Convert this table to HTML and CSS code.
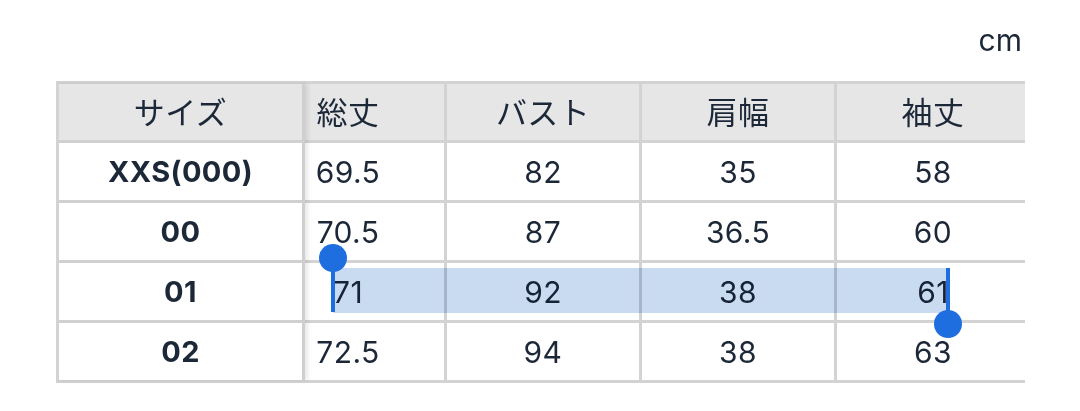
FILE: index.html
```html
<!DOCTYPE html>
<html lang="ja">
<head>
<meta charset="utf-8">
<title>サイズ表</title>
<link rel="stylesheet" href="styles.css">
</head>
<body>
<div class="page">
  <div class="unit">cm</div>
  <div class="size-table">
    <div class="fixed-col">
      <div class="cell head">サイズ</div>
      <div class="cell label">XXS(000)</div>
      <div class="cell label">00</div>
      <div class="cell label">01</div>
      <div class="cell label">02</div>
    </div>
    <div class="scroll-area">
      <div class="data-grid">
        <div class="cell head">総丈</div>
        <div class="cell head">バスト</div>
        <div class="cell head">肩幅</div>
        <div class="cell head">袖丈</div>

        <div class="cell">69.5</div>
        <div class="cell">82</div>
        <div class="cell">35</div>
        <div class="cell">58</div>

        <div class="cell">70.5</div>
        <div class="cell">87</div>
        <div class="cell">36.5</div>
        <div class="cell">60</div>

        <div class="cell">71</div>
        <div class="cell">92</div>
        <div class="cell">38</div>
        <div class="cell">61</div>

        <div class="cell">72.5</div>
        <div class="cell">94</div>
        <div class="cell">38</div>
        <div class="cell">63</div>
      </div>
    </div>
    <div class="selection"></div>
    <div class="handle handle-start"><span class="knob"></span><span class="stem"></span></div>
    <div class="handle handle-end"><span class="stem"></span><span class="knob"></span></div>
  </div>
</div>
</body>
</html>
```

FILE: styles.css
```css
html, body {
  margin: 0;
  padding: 0;
  background: #ffffff;
}

.page {
  width: 1080px;
  height: 411px;
  box-sizing: border-box;
  padding: 23px 0 0 56px;
  font-family: Inter, "Noto Sans CJK JP", sans-serif;
  color: #1c2738;
}

.unit {
  text-align: right;
  padding-right: 58px;
  font-size: 30px;
  line-height: 34px;
  height: 34px;
  margin-bottom: 24px;
}

.size-table {
  position: relative;
  display: flex;
  width: 969px;
  border-top: 3px solid #d3d3d3;
  border-bottom: 3px solid #d3d3d3;
}

.fixed-col {
  position: relative;
  z-index: 1;
  display: grid;
  grid-template-columns: 243px;
  grid-template-rows: 56px repeat(4, 57px);
  row-gap: 3px;
  background: #d0d0d0;
  border-left: 3px solid #d3d3d3;
  border-right: 3px solid #cfcfcf;
  box-shadow: 3px 0 4px rgba(0, 0, 0, 0.09);
}

.scroll-area {
  flex: 1;
  overflow: hidden;
}

.data-grid {
  margin-left: -53px;
  display: grid;
  grid-template-columns: repeat(4, 192px);
  grid-template-rows: 56px repeat(4, 57px);
  gap: 3px;
  width: max-content;
  background: #d3d3d3;
}

.cell {
  display: flex;
  align-items: center;
  justify-content: center;
  background: #ffffff;
  font-size: 30px;
  letter-spacing: 0.4px;
}

.cell.head {
  background: #e6e6e6;
  font-size: 31px;
  padding-bottom: 3px;
}

.cell.label {
  font-weight: 700;
  font-size: 29px;
}

.selection {
  position: absolute;
  left: 277px;
  top: 184px;
  width: 615px;
  height: 45px;
  background: #c9dbf1;
  mix-blend-mode: multiply;
}

.handle {
  position: absolute;
  display: flex;
  flex-direction: column;
  align-items: center;
  width: 28px;
}

.handle-start {
  left: 263px;
  top: 160px;
}

.handle-end {
  left: 878px;
  top: 184px;
}

.knob {
  display: block;
  width: 28px;
  height: 28px;
  border-radius: 50%;
  background: #1f6ee0;
}

.stem {
  display: block;
  width: 4px;
  background: #1f6ee0;
}

.handle-start .stem {
  height: 42px;
  margin-top: -2px;
}

.handle-end .stem {
  height: 44px;
  margin-bottom: -2px;
}
```
